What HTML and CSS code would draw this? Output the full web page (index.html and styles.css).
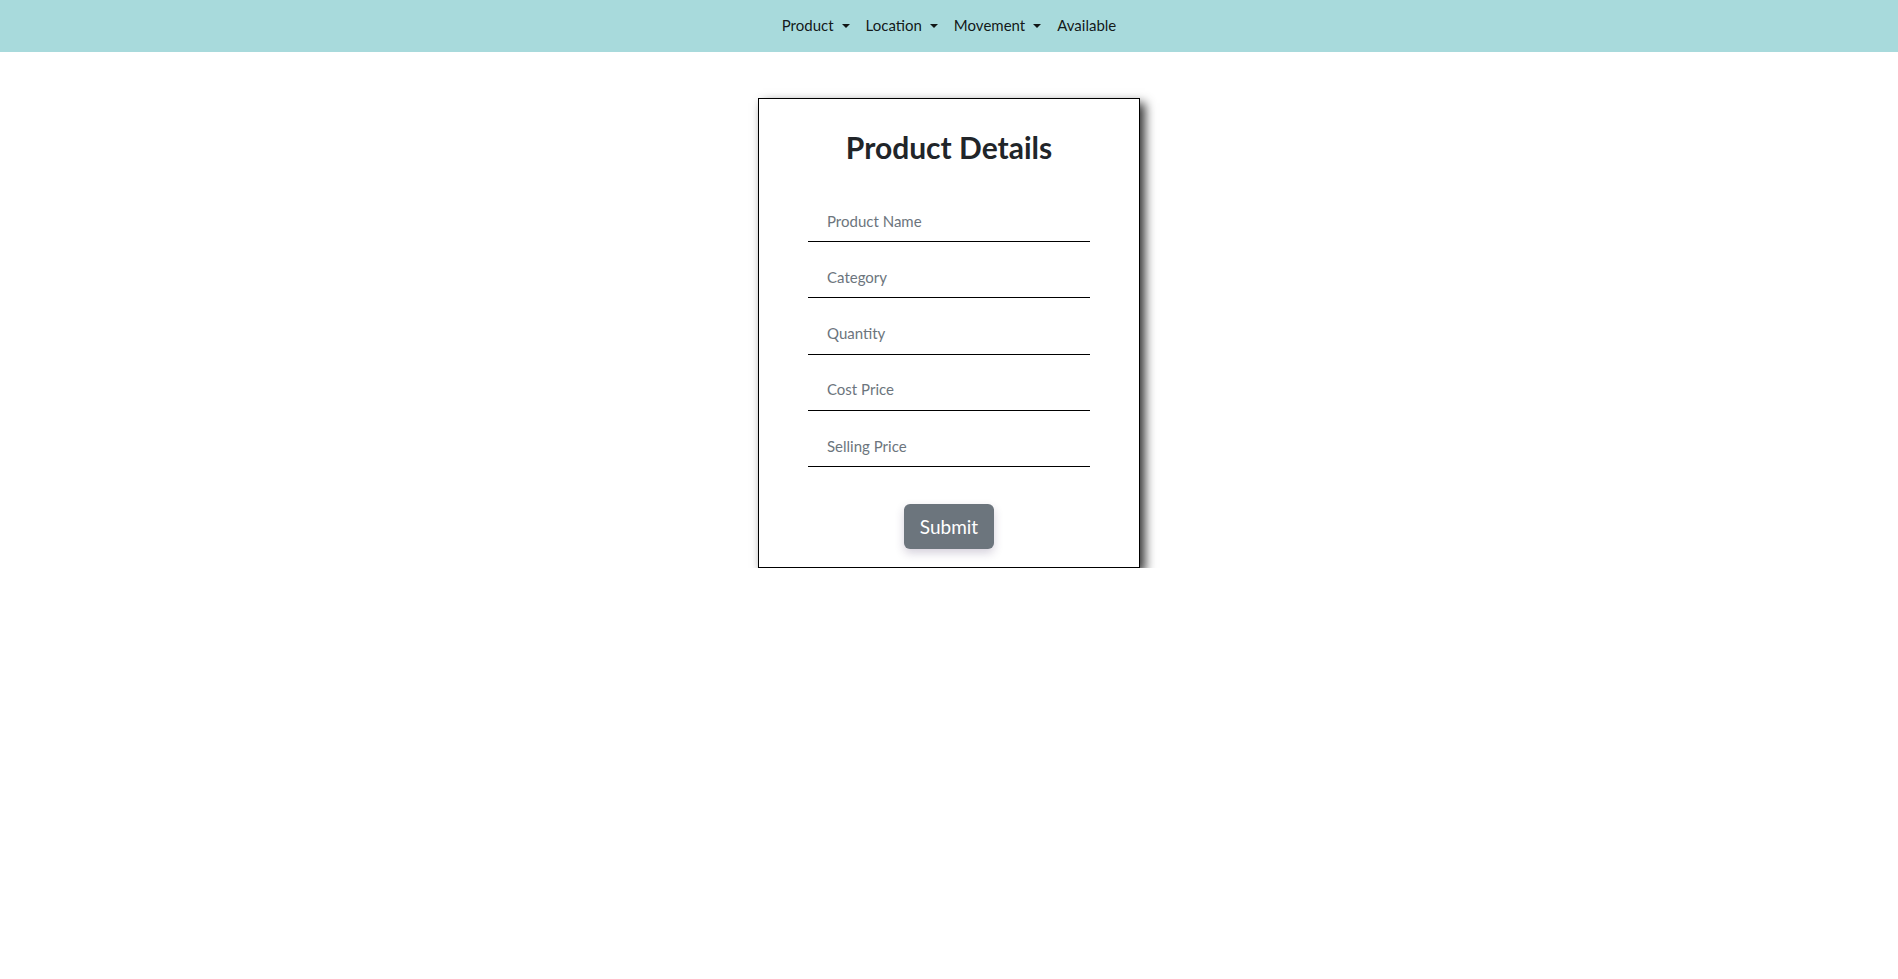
FILE: index.html
```html
<!DOCTYPE html>
<html lang="en">
<head>
<meta charset="utf-8">
<title>Product Details</title>
<link rel="stylesheet" href="styles.css">
</head>
<body>
<nav class="navbar">
  <ul class="nav">
    <li class="nav-item"><a class="nav-link dropdown" href="#">Product</a></li>
    <li class="nav-item"><a class="nav-link dropdown" href="#">Location</a></li>
    <li class="nav-item"><a class="nav-link dropdown" href="#">Movement</a></li>
    <li class="nav-item"><a class="nav-link" href="#">Available</a></li>
  </ul>
</nav>
<main class="page">
  <form class="card">
    <h2 class="card-title">Product Details</h2>
    <input class="field" type="text" placeholder="Product Name">
    <input class="field" type="text" placeholder="Category">
    <input class="field" type="text" placeholder="Quantity">
    <input class="field" type="text" placeholder="Cost Price">
    <input class="field" type="text" placeholder="Selling Price">
    <button class="btn-submit" type="button">Submit</button>
  </form>
</main>
</body>
</html>
```

FILE: styles.css
```css
* { box-sizing: border-box; }
html, body { margin: 0; padding: 0; }
body {
  font-family: Lato, "Open Sans", "Liberation Sans", sans-serif;
  color: #212529;
  background: #fff;
}
.navbar {
  height: 52px;
  background: #a8dadc;
  display: flex;
  justify-content: center;
  align-items: center;
}
.nav {
  list-style: none;
  margin: 0;
  padding: 0;
  display: flex;
  align-items: center;
}
.nav-link {
  display: flex;
  align-items: center;
  padding: 5px 8px 7px;
  font-size: 15px;
  line-height: 24px;
  color: rgba(0, 0, 0, 0.9);
  text-decoration: none;
}
.dropdown::after {
  content: "";
  display: inline-block;
  margin-left: 8px;
  margin-top: 1px;
  border-top: 4.5px solid rgba(0, 0, 0, 0.9);
  border-left: 4px solid transparent;
  border-right: 4px solid transparent;
}
.page {
  display: flex;
  justify-content: center;
  padding-top: 46px;
}
.card {
  width: 382px;
  border: 1px solid #000;
  background: #fff;
  box-shadow: 5px 5px 10px rgba(0, 0, 0, 0.8);
  padding: 29px 49px 18px;
  display: flex;
  flex-direction: column;
  align-items: center;
}
.card-title {
  margin: 0 0 38px;
  font-size: 30px;
  line-height: 38px;
  font-weight: 700;
  color: #212529;
}
.field {
  width: 282px;
  height: 38px;
  margin: 0 0 18.25px;
  padding: 4px 19px 8px;
  border: none;
  border-bottom: 1px solid #000;
  font-family: inherit;
  font-size: 15px;
  line-height: 24px;
  color: #212529;
  background: transparent;
  outline: none;
}
.field::placeholder { color: #6c757d; }
.field:last-of-type { margin-bottom: 37px; }
.btn-submit {
  width: 90px;
  height: 45px;
  border: none;
  border-radius: 6px;
  background: #6c757d;
  color: #fff;
  font-family: inherit;
  font-size: 19px;
  line-height: 30px;
  box-shadow: 0 4px 10px rgba(60, 40, 90, 0.22);
  cursor: pointer;
}
```
